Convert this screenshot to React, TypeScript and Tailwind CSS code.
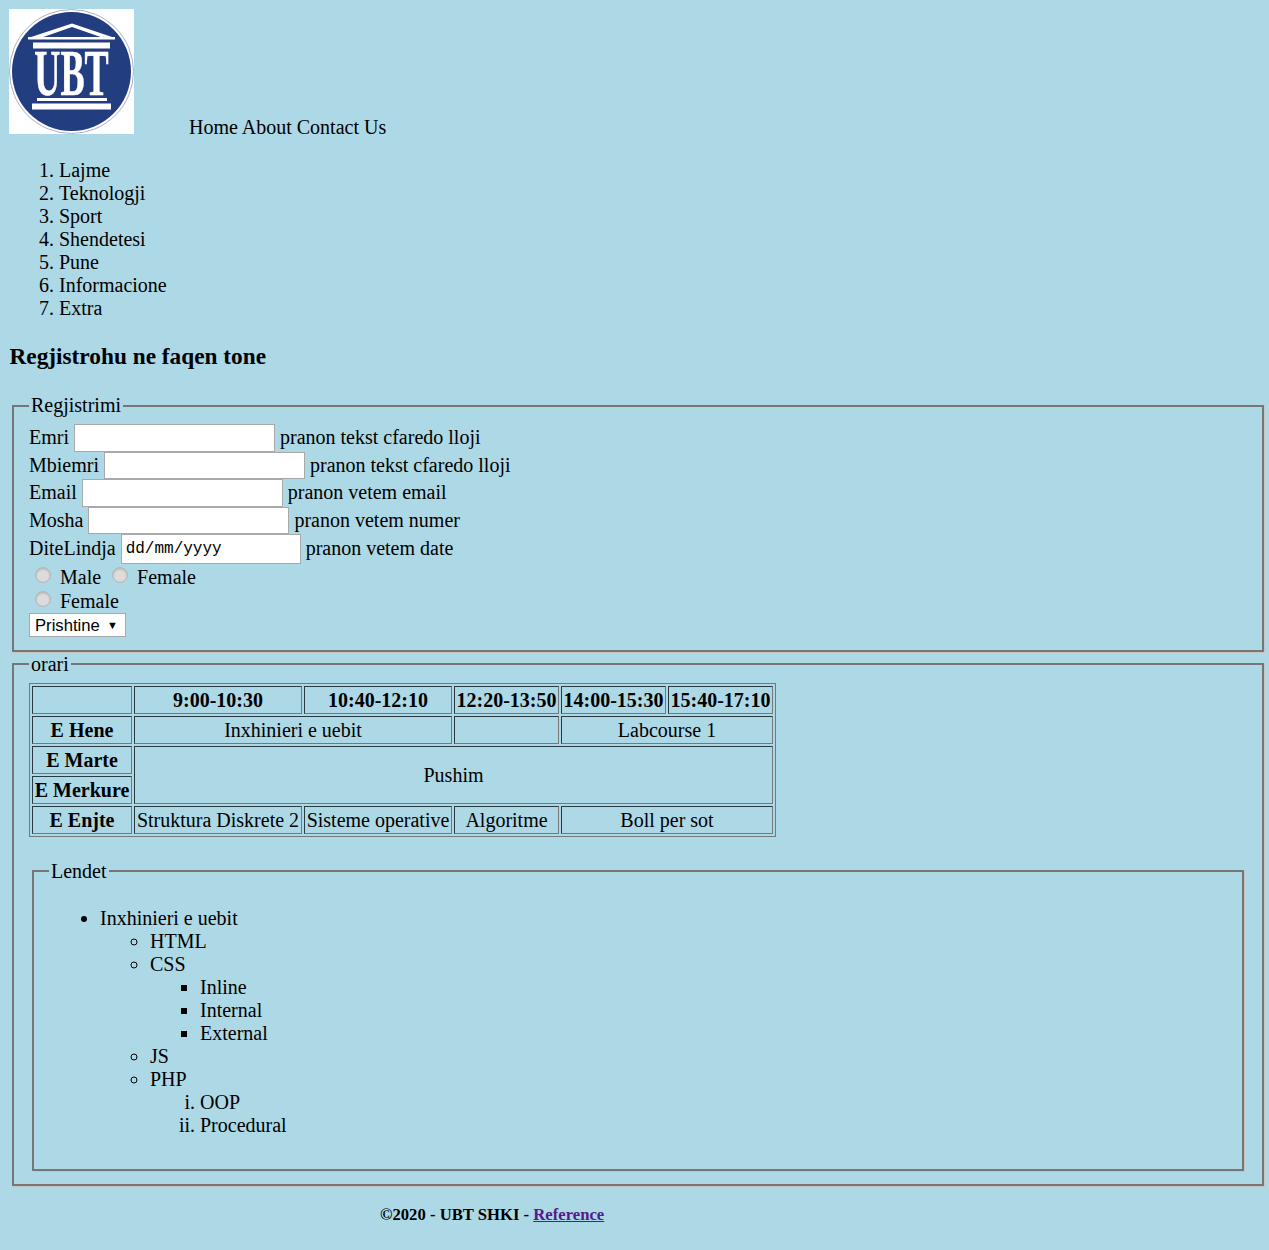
const Logo: React.FC = () => (
    <svg width="125" height="125" viewBox="0 0 125 125" className="block shrink-0 bg-white">
        <circle cx="62.5" cy="62.5" r="62" fill="none" stroke="#a9add0" strokeWidth="1" />
        <circle cx="62.5" cy="62.5" r="59.5" fill="#223d80" />
        <path d="M19 29 L63 14.5 L106 29 Z M33 28.5 L93 28.5 L63 18 Z" fill="#fff" fillRule="evenodd" />
        <rect x="19" y="28" width="87" height="2.5" fill="#fff" />
        <rect x="24" y="33.5" width="77" height="6" fill="#fff" />
        <text transform="translate(62.5 86) scale(0.556 1)" textAnchor="middle" fontFamily="'Liberation Serif', serif" fontSize="65" fontWeight="700" fill="#fff" stroke="#fff" strokeWidth="0.6">UBT</text>
        <rect x="28" y="89" width="70" height="3" fill="#fff" />
        <rect x="23" y="94.5" width="79" height="6" fill="#fff" />
    </svg>
);

const Field: React.FC<{ label: string; hint: string }> = ({ label, hint }) => (
    <div className="flex h-[27.5px] items-center">
        <span>{label}</span>
        <input type="text" className="mx-[5px] h-[27.5px] w-[201px] border border-[#a9a9a9] bg-white" />
        <span>{hint}</span>
    </div>
);

const Radio: React.FC<{ className?: string }> = ({ className }) => (
    <input type="radio" className={`h-[16px] w-[16px] appearance-none rounded-full border border-[#b5b5b5] bg-[#dcdcdc] shadow-[inset_0_1px_2px_#aaaaaa] ${className ?? ""}`} />
);

const cell = "border border-[#777777] border-t-[#2b3a40] border-l-[#2b3a40] text-center font-normal p-0 h-[28px] leading-[23px] whitespace-nowrap";
const head = "border border-[#777777] border-t-[#2b3a40] border-l-[#2b3a40] text-center font-bold p-0 h-[28px] leading-[23px] whitespace-nowrap";

export default function App() {
    return (
        <div className="min-h-[1250px] bg-[#add8e6] font-['Liberation_Serif',serif] text-[20px] leading-[23px] text-black">
            <div className="flex items-end pl-[9px] pt-[9px]">
                <Logo />
                <div className="ml-[55px] translate-y-[5px]">Home About Contact Us</div>
            </div>

            <ol className="mt-[25px] list-decimal pl-[59px]">
                <li>Lajme</li>
                <li>Teknologji</li>
                <li>Sport</li>
                <li>Shendetesi</li>
                <li>Pune</li>
                <li>Informacione</li>
                <li>Extra</li>
            </ol>

            <h3 className="ml-[9.5px] mt-[23px] text-[23.3px] font-bold leading-[27px]">Regjistrohu ne faqen tone</h3>

            <div className="ml-[12px] mr-[5px] mt-[24px] flex flex-col">
                <fieldset className="h-[258px] border-2 border-[#767676] pl-[15px] shadow-[1px_1px_0_#c4c4c4]">
                    <legend className="px-[2px]">Regjistrimi</legend>
                    <div className="mt-[7px]">
                        <Field label="Emri" hint="pranon tekst cfaredo lloji" />
                        <Field label="Mbiemri" hint="pranon tekst cfaredo lloji" />
                        <Field label="Email" hint="pranon vetem email" />
                        <Field label="Mosha" hint="pranon vetem numer" />
                        <div className="flex h-[30px] items-center">
                            <span className="-translate-y-[1px]">DiteLindja</span>
                            <input type="text" readOnly value="dd/mm/yyyy" className="mx-[5px] h-[30px] w-[180px] border border-[#a9a9a9] bg-white pl-[4px] font-['Liberation_Mono',monospace] text-[16px]" />
                            <span className="-translate-y-[1px]">pranon vetem date</span>
                        </div>
                        <div className="mt-[1px] flex h-[24px] items-center">
                            <Radio className="ml-[6px] mr-[9px] -translate-y-[2px]" />
                            <span>Male</span>
                            <Radio className="ml-[11px] mr-[9px] -translate-y-[2px]" />
                            <span>Female</span>
                        </div>
                        <div className="flex h-[24px] items-center">
                            <Radio className="ml-[6px] mr-[9px] -translate-y-[2px]" />
                            <span>Female</span>
                        </div>
                        <div className="flex h-[24px] w-[97px] items-center justify-between border border-[#a9a9a9] bg-white pl-[5px] pr-[7px] font-['Liberation_Sans',sans-serif] text-[16.67px]">
                            <span>Prishtine</span>
                            <span className="text-[11px]">▼</span>
                        </div>
                    </div>
                </fieldset>

                <fieldset className="h-[534px] border-2 border-[#767676] pl-[15px] pr-[18px] shadow-[1px_1px_0_#c4c4c4]">
                    <legend className="px-[2px] translate-y-[1px]">orari</legend>
                    <table className="mt-[8px] table-fixed border-separate border-spacing-[2px] border border-[#777777]">
                        <colgroup>
                            <col className="w-[100px]" />
                            <col className="w-[168px]" />
                            <col className="w-[148px]" />
                            <col className="w-[105px]" />
                            <col className="w-[105px]" />
                            <col className="w-[105px]" />
                        </colgroup>
                        <tbody>
                            <tr>
                                <th className={head}></th>
                                <th className={head}>9:00-10:30</th>
                                <th className={head}>10:40-12:10</th>
                                <th className={head}>12:20-13:50</th>
                                <th className={head}>14:00-15:30</th>
                                <th className={head}>15:40-17:10</th>
                            </tr>
                            <tr>
                                <th className={head}>E Hene</th>
                                <td colSpan={2} className={cell}>Inxhinieri e uebit</td>
                                <td className={cell}></td>
                                <td colSpan={2} className={cell}>Labcourse 1</td>
                            </tr>
                            <tr>
                                <th className={head}>E Marte</th>
                                <td colSpan={5} rowSpan={2} className={cell}>Pushim</td>
                            </tr>
                            <tr>
                                <th className={head}>E Merkure</th>
                            </tr>
                            <tr>
                                <th className={head}>E Enjte</th>
                                <td className={cell}>Struktura Diskrete 2</td>
                                <td className={cell}>Sisteme operative</td>
                                <td className={cell}>Algoritme</td>
                                <td colSpan={2} className={cell}>Boll per sot</td>
                            </tr>
                        </tbody>
                    </table>

                    <fieldset className="ml-[3px] mt-[22px] h-[312px] border-2 border-[#767676] pl-[15px] shadow-[1px_1px_0_#c4c4c4]">
                        <legend className="px-[2px] translate-y-[1px]">Lendet</legend>
                        <ul className="mt-[25px] list-disc pl-[51px]">
                            <li>
                                Inxhinieri e uebit
                                <ul className="list-[circle] pl-[50px]">
                                    <li>HTML</li>
                                    <li>
                                        CSS
                                        <ul className="list-[square] pl-[50px]">
                                            <li>Inline</li>
                                            <li>Internal</li>
                                            <li>External</li>
                                        </ul>
                                    </li>
                                    <li>JS</li>
                                    <li>
                                        PHP
                                        <ol className="list-[lower-roman] pl-[50px]">
                                            <li>OOP</li>
                                            <li>Procedural</li>
                                        </ol>
                                    </li>
                                </ul>
                            </li>
                        </ul>
                    </fieldset>
                </fieldset>
            </div>

            <div className="ml-[380px] mt-[17px] text-[16.67px] font-bold">
                ©2020 - UBT SHKI - <a href="#" className="text-[#551a8b] underline">Reference</a>
            </div>
        </div>
    );
}
